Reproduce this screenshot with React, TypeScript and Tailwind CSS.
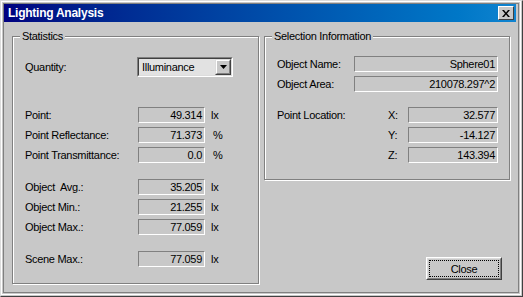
import React from "react";

const Field = ({ value, w }: { value: string; w: string }) => (
  <div
    className={`${w} h-[16px] border border-t-[#808080] border-l-[#808080] border-b-white border-r-white flex items-center justify-end pr-[2px] leading-[14px]`}
  >
    {value}
  </div>
);

const LRow = ({ label, value, unit }: { label: string; value: string; unit: string }) => (
  <div className="flex items-center h-[16px]">
    <div className="w-[113px] whitespace-pre">{label}</div>
    <Field value={value} w="w-[67px]" />
    <div className={unit === "%" ? "ml-[8px]" : "ml-[6px]"}>{unit}</div>
  </div>
);

const Group = ({
  title,
  className,
  children,
}: {
  title: string;
  className: string;
  children: React.ReactNode;
}) => (
  <div
    className={`relative border border-[#808080] shadow-[1px_1px_0_#ffffff,inset_1px_1px_0_#ffffff] ${className}`}
  >
    <div className="absolute left-[7px] top-[-8px] bg-[#c8c8c8] px-[2px] leading-[14px]">{title}</div>
    {children}
  </div>
);

export default function App() {
  return (
    <div className="w-[523px] h-[297px] bg-[#c8c8c8] border border-t-[#dcdcdc] border-l-[#dcdcdc] border-r-[#404040] border-b-[#404040] pr-[1px] pb-[1px] font-['Liberation_Sans',Arial,sans-serif] text-[11px] tracking-[-0.3px] text-black">
      <div className="h-full border border-white p-[1px]">
        <div className="h-full border border-[#808080] flex flex-col">
          {/* title bar */}
          <div className="h-[18px] shrink-0 mr-[2px] flex items-center justify-between pl-[4px] pr-[2px] bg-gradient-to-r from-[#000080] to-[#1084d0]">
            <span className="text-white font-bold text-[12px] tracking-[-0.25px] leading-[18px]">Lighting Analysis</span>
            <div className="w-[16px] h-[14px] bg-[#c8c8c8] border border-t-white border-l-white border-r-[#404040] border-b-[#404040] flex items-center justify-center">
              <svg width="8" height="7" viewBox="0 0 8 7">
                <path d="M0 0h2l2 2.5L6 0h2L5 3.5 8 7H6L4 4.5 2 7H0l3-3.5z" fill="#000" />
              </svg>
            </div>
          </div>
          {/* body */}
          <div className="flex-1 flex items-start pl-[8px] pt-[14px] gap-[5px]">
            <Group title="Statistics" className="w-[247px] h-[248px] shrink-0 pl-[12px] pt-[20px]">
              <div className="flex items-center h-[20px]">
                <div className="w-[112px]">Quantity:</div>
                <div className="w-[96px] h-[20px] border border-t-[#808080] border-l-[#808080] border-b-white border-r-white">
                  <div className="h-full border border-t-[#404040] border-l-[#404040] border-b-[#dcdcdc] border-r-[#dcdcdc] bg-[#e2e2e2] flex items-center justify-between">
                    <span className="pl-[3px] leading-[14px]">Illuminance</span>
                    <div className="w-[16px] h-[16px] bg-[#c8c8c8] border border-t-[#dcdcdc] border-l-[#dcdcdc] border-r-[#404040] border-b-[#404040]">
                      <div className="h-full border border-t-white border-l-white border-r-[#808080] border-b-[#808080] flex items-center justify-center">
                        <svg width="7" height="4" viewBox="0 0 7 4">
                          <path d="M0 0h7L3.5 4z" fill="#000" />
                        </svg>
                      </div>
                    </div>
                  </div>
                </div>
              </div>
              <div className="mt-[30px] flex flex-col gap-[4px]">
                <LRow label="Point:" value="49.314" unit="lx" />
                <LRow label="Point Reflectance:" value="71.373" unit="%" />
                <LRow label="Point Transmittance:" value="0.0" unit="%" />
              </div>
              <div className="mt-[16px] flex flex-col gap-[4px]">
                <LRow label="Object  Avg.:" value="35.205" unit="lx" />
                <LRow label="Object Min.:" value="21.255" unit="lx" />
                <LRow label="Object Max.:" value="77.059" unit="lx" />
              </div>
              <div className="mt-[16px] flex flex-col">
                <LRow label="Scene Max.:" value="77.059" unit="lx" />
              </div>
            </Group>
            <div className="flex flex-col w-[246px] shrink-0">
              <Group title="Selection Information" className="w-[246px] h-[144px] pl-[12px] pt-[19px]">
                <div className="flex flex-col gap-[4px]">
                  <div className="flex items-center h-[16px]">
                    <div className="w-[77px]">Object Name:</div>
                    <Field value="Sphere01" w="w-[144px]" />
                  </div>
                  <div className="flex items-center h-[16px]">
                    <div className="w-[77px]">Object Area:</div>
                    <Field value="210078.297^2" w="w-[144px]" />
                  </div>
                </div>
                <div className="mt-[15px] flex">
                  <div className="w-[111px] h-[16px] flex items-center">Point Location:</div>
                  <div className="flex flex-col gap-[4px]">
                    {[
                      ["X:", "32.577"],
                      ["Y:", "-14.127"],
                      ["Z:", "143.394"],
                    ].map(([l, v]) => (
                      <div key={l} className="flex items-center h-[16px]">
                        <div className="w-[20px]">{l}</div>
                        <Field value={v} w="w-[90px]" />
                      </div>
                    ))}
                  </div>
                </div>
              </Group>
              <div className="self-end mr-[8px] mt-[77px] w-[76px] h-[23px] border border-t-white border-l-white border-r-[#404040] border-b-[#404040]">
                <div className="h-full border border-t-[#dcdcdc] border-l-[#dcdcdc] border-r-[#808080] border-b-[#808080] p-[1px]">
                  <div className="h-full border border-dotted border-black flex items-center justify-center leading-[14px]">
                    Close
                  </div>
                </div>
              </div>
            </div>
          </div>
        </div>
      </div>
    </div>
  );
}
